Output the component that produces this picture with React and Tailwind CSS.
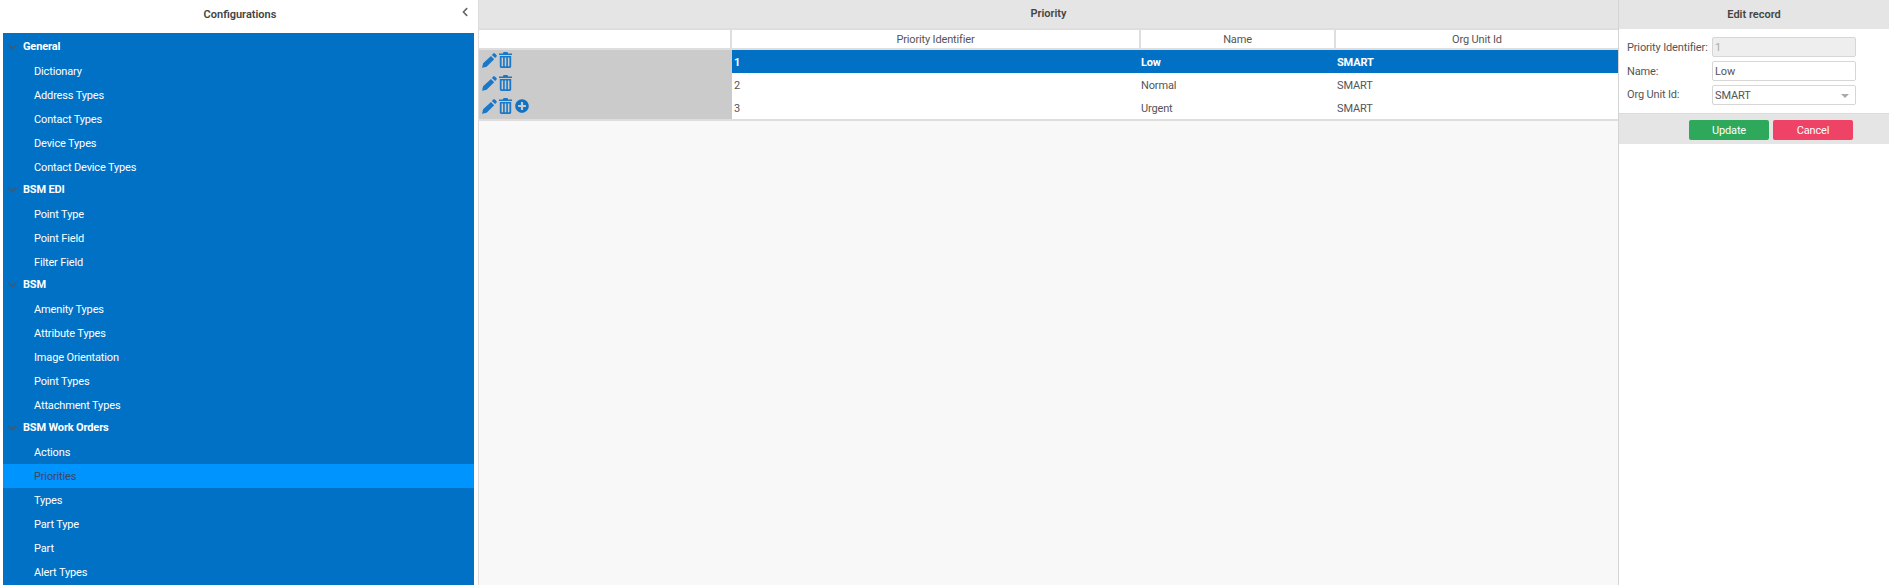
import React from "react";
import { FaPlusCircle, FaChevronLeft } from "react-icons/fa";

const tree = [
  { name: "General", items: ["Dictionary", "Address Types", "Contact Types", "Device Types", "Contact Device Types"] },
  { name: "BSM EDI", items: ["Point Type", "Point Field", "Filter Field"] },
  { name: "BSM", items: ["Amenity Types", "Attribute Types", "Image Orientation", "Point Types", "Attachment Types"] },
  { name: "BSM Work Orders", items: ["Actions", "Priorities", "Types", "Part Type", "Part", "Alert Types"] },
];

const rows = [
  { id: "1", name: "Low", org: "SMART" },
  { id: "2", name: "Normal", org: "SMART" },
  { id: "3", name: "Urgent", org: "SMART", add: true },
];

function PencilIcon() {
  return (
    <svg width="15" height="15" viewBox="0 0 15 15" className="text-[#1a78c8] shrink-0 mt-[1px]">
      <path fill="currentColor" d="M11.2.6c.5-.5 1.2-.5 1.7 0l1.5 1.5c.5.5.5 1.2 0 1.7l-1.3 1.3-3.2-3.2zM9 3 12.2 6.2 4.6 13.8.4 14.8c-.2 0-.3-.1-.3-.3l1-4.2z" />
    </svg>
  );
}

function TrashIcon() {
  return (
    <svg width="13" height="16" viewBox="0 0 13 16" className="text-[#1a78c8] shrink-0">
      <path fill="currentColor" d="M4.5 0h4l.6 1.4H13v1.6H0V1.4h3.9zM.8 4h11.4v10.6c0 .8-.6 1.4-1.4 1.4H2.2c-.8 0-1.4-.6-1.4-1.4z" />
      <path fill="#cbcbcb" d="M2.6 5.6h1.5v8.6H2.6zM5.75 5.6h1.5v8.6h-1.5zM8.9 5.6h1.5v8.6H8.9z" />
    </svg>
  );
}

function ExpandIcon() {
  return (
    <svg width="9" height="6" viewBox="0 0 9 6" className="ml-[5px] shrink-0">
      <path d="M.7.8 4.5 4.6 8.3.8" fill="none" stroke="#45586b" strokeWidth="1.6" />
    </svg>
  );
}

function Sidebar() {
  return (
    <aside className="w-[479px] shrink-0 h-full flex flex-col bg-white border-r border-[#dcdcdc] overflow-hidden">
      <div className="h-[33px] shrink-0 relative flex items-center justify-center pb-[3px] pl-[2px] text-[#444] font-semibold tracking-normal">
        Configurations
        <FaChevronLeft className="absolute right-[8px] top-[7px] text-[#666] text-[10px]" />
      </div>
      <div className="ml-[3px] w-[471px] flex-1 bg-[#0071c5] pt-[3px] text-white">
        {tree.map((group) => (
          <div key={group.name}>
            <div className="h-[23px] flex items-center pb-[1px]">
              <ExpandIcon />
              <span className="ml-[6px] font-bold">{group.name}</span>
            </div>
            {group.items.map((item) => (
              <div
                key={item}
                className={`h-[24px] flex items-center pt-[2px] pl-[31px] ${item === "Priorities" ? "bg-[#0094ff] text-[#3c4a58]" : ""}`}
              >
                {item}
              </div>
            ))}
          </div>
        ))}
      </div>
    </aside>
  );
}

function Grid() {
  return (
    <main className="flex-1 min-w-0 h-full flex flex-col bg-[#f8f8f8] border-r border-[#d4d4d4]">
      <div className="h-[30px] shrink-0 flex items-center justify-center pt-[1px] bg-[#e5e5e5] border-b-2 border-[#dedede] text-[#444] font-semibold tracking-normal">
        Priority
      </div>
      <div className="grid grid-cols-[253px_409px_195px_1fr] h-[20px] shrink-0 bg-white border-b-2 border-[#dedede] text-[#555]">
        <div className="border-r-2 border-[#dedede]" />
        <div className="flex items-center justify-center pt-[2px] border-r-2 border-[#dedede]">Priority Identifier</div>
        <div className="flex items-center justify-center pt-[2px] border-r-2 border-[#dedede]">Name</div>
        <div className="flex items-center justify-center pt-[2px]">Org Unit Id</div>
      </div>
      <div className="border-b-2 border-[#dedede] shrink-0">
        {rows.map((row, i) => (
          <div
            key={row.id}
            className={`grid grid-cols-[253px_409px_195px_1fr] h-[23px] ${i === 0 ? "bg-[#0071c5] text-white font-bold" : "bg-white text-[#555]"}`}
          >
            <div className="bg-[#cbcbcb] flex items-start pt-[2px] pl-[3px] gap-[2px]">
              <PencilIcon />
              <TrashIcon />
              {row.add && <FaPlusCircle className="text-[#0f72c4] text-[14px] mt-[1px] ml-[1px] shrink-0" />}
            </div>
            <div className="flex items-center pt-[3px] pl-[2px]">{row.id}</div>
            <div className="flex items-center pt-[3px]">{row.name}</div>
            <div className="flex items-center pt-[3px] pl-[1px]">{row.org}</div>
          </div>
        ))}
      </div>
    </main>
  );
}

function EditPanel() {
  const inputBox = "w-[144px] h-[20px] rounded-[2px] border border-[#d6d6d6] flex items-center pt-[2px] px-[2px]";
  return (
    <aside className="w-[270px] shrink-0 h-full bg-white flex flex-col">
      <div className="h-[29px] shrink-0 flex items-center justify-center pt-[2px] bg-[#e5e5e5] text-[#444] font-semibold tracking-normal">
        Edit record
      </div>
      <div className="h-[84px] shrink-0 flex flex-col gap-[4px] pt-[8px] pl-[8px] text-[#555]">
        <div className="flex items-center">
          <span className="w-[85px] pt-[2px] whitespace-nowrap">Priority Identifier:</span>
          <div className={`${inputBox} bg-[#eeeeee] text-[#aaa]`}>1</div>
        </div>
        <div className="flex items-center">
          <span className="w-[85px] pt-[2px]">Name:</span>
          <div className={inputBox}>Low</div>
        </div>
        <div className="flex items-center">
          <span className="w-[85px]">Org Unit Id:</span>
          <div className={`${inputBox} justify-between pr-[6px]`}>
            SMART
            <span className="w-0 h-0 border-x-[4px] border-x-transparent border-t-[4px] border-t-[#aaa]" />
          </div>
        </div>
      </div>
      <div className="h-[31px] shrink-0 bg-[#e5e5e5] border-t border-[#dcdcdc] flex items-center gap-[4px] pt-[2px] pl-[70px] text-white">
        <button className="w-[80px] h-[20px] pt-[3px] rounded-[2px] bg-[#2ea95c]">Update</button>
        <button className="w-[80px] h-[20px] pt-[3px] rounded-[2px] bg-[#ee4266]">Cancel</button>
      </div>
    </aside>
  );
}

export default function App() {
  return (
    <div className="flex w-[1889px] h-[585px] overflow-hidden bg-white text-[11px] tracking-[-0.15px] font-['Roboto',sans-serif]">
      <Sidebar />
      <Grid />
      <EditPanel />
    </div>
  );
}
